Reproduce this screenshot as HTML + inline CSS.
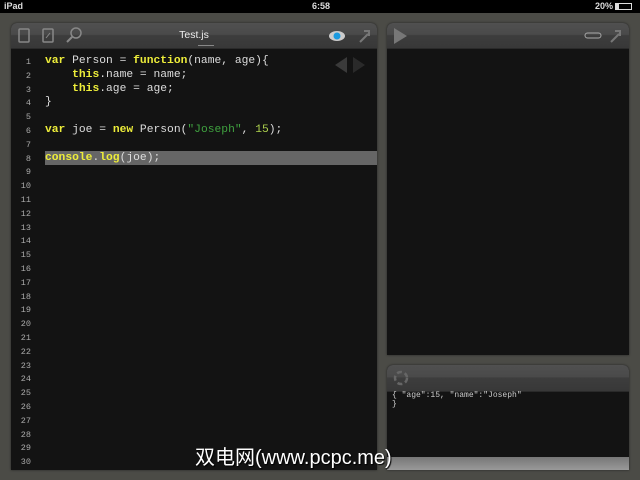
<!DOCTYPE html>
<html><head><meta charset="utf-8"><style>
*{margin:0;padding:0;box-sizing:border-box}
body{width:640px;height:480px;overflow:hidden;background:#4b4b46;position:relative;font-family:"Liberation Sans",sans-serif}
.sb{position:absolute;left:0;top:0;width:640px;height:13px;background:#000;color:#ddd;font-size:9px;font-weight:bold}
.panel{position:absolute;background:#131313;border-radius:6px 6px 0 0;overflow:hidden;box-shadow:0 0 2px #222}
.tb{position:absolute;left:0;top:0;right:0;height:26px;background:linear-gradient(#505050 0,#4a4a4a 45%,#3d3d3d 50%,#383838 100%);border-bottom:1px solid #2a2a2a}
.code{position:absolute;font-family:"Liberation Mono",monospace;font-size:11.3px;line-height:13.79px;white-space:pre;color:#ddd}
.ln{position:absolute;left:0;width:20px;text-align:right;white-space:pre;font-family:"Liberation Mono",monospace;font-size:8.5px;line-height:13.79px;color:#aaa}
.k{color:#eded3a;font-weight:bold}.s{color:#3fa13f}.n{color:#aed34e}
.wm{position:absolute;left:195px;top:441px;color:#fff;font-size:20px;font-family:"Liberation Sans","Noto Sans CJK SC",sans-serif;text-shadow:1px 1px 1px #000}
</style></head><body>
<div class="sb"><span style="position:absolute;left:4px;top:1px">iPad</span><span style="position:absolute;left:312px;top:1px">6:58</span><span style="position:absolute;left:595px;top:1px">20%</span><span style="position:absolute;left:615px;top:3px;width:17px;height:7px;border:1px solid #ddd"><span style="display:block;width:3px;height:5px;background:#ddd"></span></span></div>

<div class="panel" style="left:11px;top:23px;width:366px;height:447px">
<div class="tb">
<svg width="366" height="26" style="position:absolute;left:0;top:0">
<rect x="8" y="6" width="10" height="13" rx="1" fill="none" stroke="#888" stroke-width="1.5"/>
<rect x="32" y="6" width="10" height="13" rx="1" fill="none" stroke="#888" stroke-width="1.5"/>
<path d="M35 15l4-5" stroke="#888"/>
<circle cx="65" cy="10" r="5" fill="none" stroke="#888" stroke-width="1.5"/><path d="M61 14l-5 5" stroke="#888" stroke-width="2"/>
<ellipse cx="326" cy="13" rx="8" ry="5" fill="#ccc"/><circle cx="326" cy="13" r="3.5" fill="#1a9ae0"/>
<path d="M349 19l8-8M353 8h5v5" stroke="#777" stroke-width="2" fill="none"/>
</svg>
<div style="position:absolute;left:0;width:366px;top:6px;text-align:center;color:#eee;font-size:10.5px">Test.js</div>
<div style="position:absolute;left:187px;top:22px;width:16px;height:1px;background:#888"></div>
</div>
<svg width="40" height="20" style="position:absolute;left:322px;top:32px"><path d="M14 2L2 10l12 8z" fill="#3a3a3a"/><path d="M20 2l12 8-12 8z" fill="#2a2a2a"/></svg>
<div style="position:absolute;left:34px;top:128px;width:332px;height:14px;background:#666"></div>
<div class="ln" style="top:33px">1
2
3
4
5
6
7
8
9
10
11
12
13
14
15
16
17
18
19
20
21
22
23
24
25
26
27
28
29
30</div>
<div class="code" style="left:34px;top:32px"><span class="k">var</span> Person = <span class="k">function</span>(name, age){
    <span class="k">this</span>.name = name;
    <span class="k">this</span>.age = age;
}

<span class="k">var</span> joe = <span class="k">new</span> Person(<span class="s">"Joseph"</span>, <span class="n">15</span>);

<span class="k">console</span>.<span class="k">log</span>(joe);</div>
</div>

<div class="panel" style="left:387px;top:23px;width:242px;height:332px">
<div class="tb"><svg width="242" height="26"><path d="M7 5l13 8-13 8z" fill="#777"/><rect x="198" y="10" width="16" height="5" rx="2.5" fill="none" stroke="#aaa"/><path d="M224 19l8-8M228 8h5v5" stroke="#777" stroke-width="2" fill="none"/></svg></div>
</div>

<div class="panel" style="left:387px;top:365px;width:242px;height:105px">
<div class="tb" style="height:27px"><svg width="30" height="26"><circle cx="14" cy="13" r="6" fill="none" stroke="#666" stroke-width="2.5" stroke-dasharray="5 3"/></svg></div>
<div class="code" style="left:5px;top:26px;font-size:8px;line-height:9px;color:#ccc">{ "age":15, "name":"Joseph"
}</div>
<div style="position:absolute;left:0;top:92px;width:242px;height:13px;background:linear-gradient(#777,#999)"></div>
</div>
<div class="wm">双电网(www.pcpc.me)</div>
</body></html>
